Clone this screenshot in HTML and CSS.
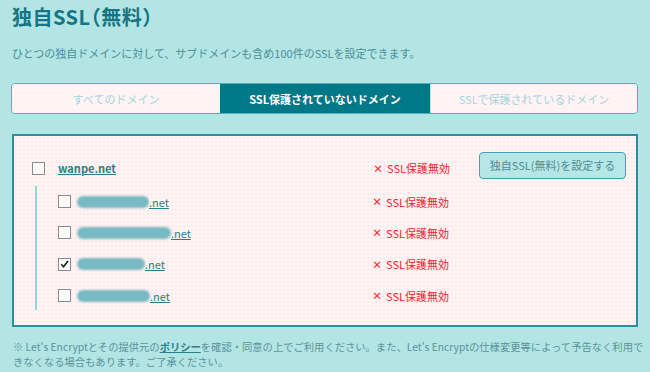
FILE: index.html
```html
<!DOCTYPE html>
<html lang="ja">
<head>
<meta charset="utf-8">
<link rel="stylesheet" href="styles.css">
</head>
<body>
<div class="page">
  <h1 class="title">独自SSL（無料）</h1>
  <p class="lead">ひとつの独自ドメインに対して、サブドメインも含め100件のSSLを設定できます。</p>
  <div class="tabs">
    <div class="tab">すべてのドメイン</div>
    <div class="tab active">SSL保護されていないドメイン</div>
    <div class="tab">SSLで保護されているドメイン</div>
  </div>
  <div class="panel">
    <div class="row parent">
      <span class="cb"></span>
      <a class="domain main">wanpe.net</a>
      <span class="status"><span class="x">×</span>SSL保護無効</span>
      <button class="btn">独自SSL(無料)を設定する</button>
    </div>
    <div class="children">
      <div class="row child">
        <span class="cb"></span>
        <a class="domain"><span class="blob" style="width:72px"></span>.net</a>
        <span class="status"><span class="x">×</span>SSL保護無効</span>
      </div>
      <div class="row child">
        <span class="cb"></span>
        <a class="domain"><span class="blob" style="width:94px"></span>.net</a>
        <span class="status"><span class="x">×</span>SSL保護無効</span>
      </div>
      <div class="row child">
        <span class="cb checked"><svg viewBox="0 0 12 12" width="12" height="12"><path d="M2.5 6.2 L5 9 L9.8 2.6" fill="none" stroke="#222" stroke-width="1.8"/></svg></span>
        <a class="domain"><span class="blob" style="width:68px"></span>.net</a>
        <span class="status"><span class="x">×</span>SSL保護無効</span>
      </div>
      <div class="row child">
        <span class="cb"></span>
        <a class="domain"><span class="blob" style="width:73px"></span>.net</a>
        <span class="status"><span class="x">×</span>SSL保護無効</span>
      </div>
    </div>
  </div>
  <p class="note">※ Let's Encryptとその提供元の<a class="policy">ポリシー</a>を確認・同意の上でご利用ください。また、Let's Encryptの仕様変更等によって予告なく利用で<br>きなくなる場合もあります。ご了承ください。</p>
</div>
</body>
</html>
```
FILE: styles.css
```css
html, body {
  margin: 0;
  padding: 0;
  background: #b3e5e4;
}
body {
  font-family: "Noto Sans CJK JP", "Noto Sans", sans-serif;
  color: #3d8794;
}
.page {
  padding: 2px 12px 0 12px;
  width: 626px;
}
.title {
  margin: 0;
  font-size: 20px;
  line-height: 30px;
  font-weight: bold;
  color: #137585;
  font-feature-settings: "halt";
  letter-spacing: 0.5px;
}
.lead {
  margin: 13px 0 0 0;
  font-size: 11px;
  line-height: 16px;
  color: #4b8e99;
}
.tabs {
  margin-top: 22px;
  display: flex;
  height: 29px;
  border: 1px solid #55b0bd;
  border-radius: 4px;
  overflow: hidden;
  width: 625px;
  margin-left: -1px;
}
.tab {
  flex: 0 0 208px;
  display: flex;
  align-items: center;
  justify-content: center;
  background: #fff3f3;
  color: #9fd6de;
  font-size: 11px;
}
.tab.active {
  flex-basis: 210px;
  background: #007887;
  color: #ffffff;
  font-weight: bold;
}
.tab:last-child {
  flex: 1;
  border-left: 1px solid #b3e5e4;
}
.panel {
  margin-top: 20px;
  border: 2px solid #2e8d9b;
  background-color: #fff3f3;
  background-image: radial-gradient(circle, #f6e4e4 0.6px, transparent 0.9px);
  background-size: 4px 4px;
  box-sizing: border-box;
  height: 193px;
  padding: 18px 0 0 18px;
}
.row {
  display: flex;
  align-items: center;
}
.parent {
  height: 28px;
}
.cb {
  display: inline-flex;
  width: 11px;
  height: 11px;
  border: 1px solid #8c8c8c;
  background: #fbfbfb;
  flex: 0 0 auto;
  align-items: center;
  justify-content: center;
}
.cb svg { display: block; margin-top: -1px; }
.domain {
  color: #2b7f8d;
  text-decoration: underline;
  font-size: 11px;
  display: inline-flex;
  align-items: center;
  flex: 0 0 auto;
}
.main {
  margin-left: 13px;
  font-weight: bold;
  width: 315px;
}
.parent .status { width: 106px; }
.status {
  color: #f3242e;
  font-size: 11px;
  display: inline-flex;
  align-items: center;
  white-space: nowrap;
  flex: 0 0 auto;
}
.x {
  font-size: 10px;
  font-weight: bold;
  margin-right: 4px;
}
.btn {
  font-family: inherit;
  font-size: 11px;
  color: #4d8d97;
  background: #b6e6e6;
  border: 1px solid #41a2b1;
  border-radius: 4px;
  height: 27px;
  width: 147px;
  padding: 0;
  margin-top: -6px;
}
.children {
  margin-left: 3px;
  margin-top: 4px;
  border-left: 2px solid #95d4d9;
  padding-left: 21px;
  height: 124px;
  width: 420px;
}
.child {
  height: 31.3px;
}
.child .domain {
  margin-left: 6px;
  width: 295px;
}
.blob {
  display: inline-block;
  height: 12px;
  border-radius: 7px;
  background: #78b9c4;
  filter: blur(1.2px);
}
.note {
  margin: 12px 0 0 1px;
  font-size: 10.3px;
  line-height: 15px;
  color: #5a939c;
  white-space: nowrap;
}
.policy {
  color: #2b7f8d;
  font-weight: bold;
  text-decoration: underline;
}
```
